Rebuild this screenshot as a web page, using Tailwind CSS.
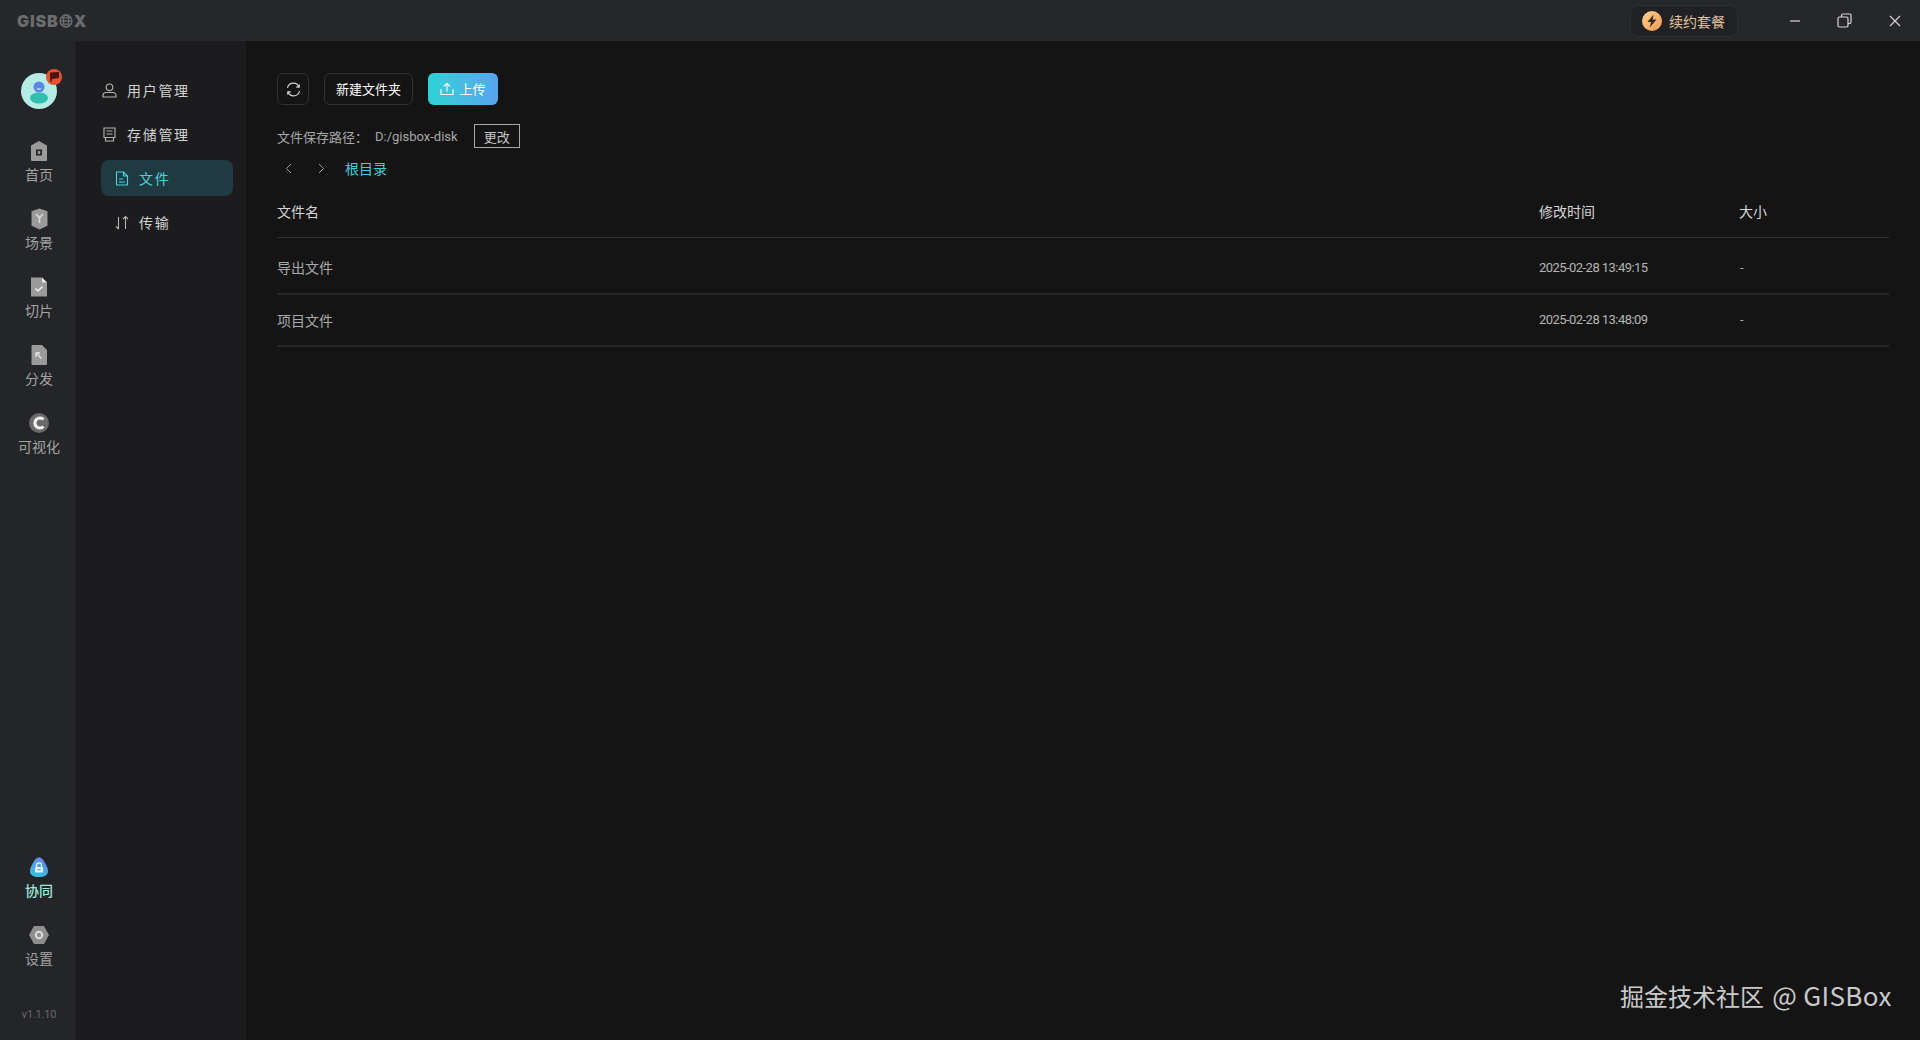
<!DOCTYPE html>
<html lang="zh-CN">
<head>
  <meta charset="UTF-8" />
  <title>GISBox</title>
  <script src="https://cdn.jsdelivr.net/npm/@tailwindcss/browser@4"></script>
</head>
<body class="bg-[#141414] text-[#aaaaaa] font-['Noto_Sans_CJK_SC','Noto_Sans',sans-serif] overflow-hidden">
<div class="relative w-[1920px] h-[1040px] flex flex-col">

  <!-- title bar -->
  <header class="h-[41px] shrink-0 bg-[#26272a] flex items-center pl-[17px]">
    <div class="flex items-center font-['Inter',sans-serif] font-black text-[16px] leading-none text-[#6b6c6e] tracking-[0.9px] w-[74px]">
      <span>GISB</span>
      <svg class="w-[14px] h-[14px] mx-[0.5px] shrink-0" viewBox="0 0 14 14" fill="none" stroke="#6b6c6e" stroke-width="1.3"><circle cx="7" cy="7" r="6"/><ellipse cx="7" cy="7" rx="2.6" ry="6"/><path d="M1 7h12M2 3.8h10M2 10.2h10"/></svg>
      <span>X</span>
    </div>
    <div class="ml-auto flex items-center">
      <div class="w-[108px] h-[32px] rounded-[8px] bg-[#202124] border border-[#2e2f32] flex items-center pl-[11px] gap-[7px]">
        <span class="w-[20px] h-[20px] rounded-full bg-linear-to-br from-[#fbd08f] to-[#ee9c50] flex items-center justify-center">
          <svg class="w-[12px] h-[14px]" viewBox="0 0 12 14" fill="#3a2a18"><path d="M7.5 0.5 1.5 8h3.6L3.8 13.5 10.5 5.6H6.6z"/></svg>
        </span>
        <span class="text-[14px] leading-none text-[#e0c09a]">续约套餐</span>
      </div>
      <div class="ml-[51px] flex items-center">
        <svg class="w-[12px] h-[12px]" viewBox="0 0 12 12" stroke="#d8d8d8" stroke-width="1.2" fill="none"><path d="M1 6h10"/></svg>
        <svg class="ml-[36px] w-[15px] h-[15px]" viewBox="0 0 15 15" stroke="#d8d8d8" stroke-width="1.2" fill="none"><rect x="1" y="4" width="10" height="10" rx="1.5"/><path d="M4.5 4V2.5A1.5 1.5 0 0 1 6 1h7a1.5 1.5 0 0 1 1 1v7a1.5 1.5 0 0 1-1.5 1.5H11"/></svg>
        <svg class="ml-[37px] mr-[19px] w-[12px] h-[12px]" viewBox="0 0 12 12" stroke="#d8d8d8" stroke-width="1.1" fill="none"><path d="M1 1l10 10M11 1 1 11"/></svg>
      </div>
    </div>
  </header>

  <div class="flex-1 flex min-h-0">
    <!-- icon rail -->
    <nav class="w-[77px] shrink-0 bg-[#242528] border-r border-[#161618] flex flex-col items-center pt-[32px] pl-[2px] text-[14px] leading-[20px] text-[#a3a3a3]">
      <div class="relative w-[36px] h-[36px] rounded-full bg-[#b5ece6]">
        <svg class="w-[36px] h-[36px]" viewBox="0 0 36 36"><circle cx="18" cy="14" r="5.5" fill="#5a86e8"/><path d="M15.5 15.5a3 3 0 0 0 5 0z" fill="#e8f4f4"/><ellipse cx="18" cy="25" rx="9" ry="5.5" fill="#2fbfae"/></svg>
        <span class="absolute -top-[4px] -right-[5px] w-[16px] h-[16px] rounded-full bg-[#e8502f] flex items-center justify-center">
          <svg class="w-[11px] h-[10px]" viewBox="0 0 11 10" fill="#4a1412"><path d="M1 0.5 10 0v6L3 7l-.6 3H1.3z"/></svg>
        </span>
      </div>

      <div class="mt-[31px] flex flex-col items-center gap-[24px]">
        <a class="flex flex-col items-center gap-[2px]">
          <svg class="w-[16px] h-[22px]" viewBox="0 0 16 22"><path fill-rule="evenodd" fill="#9a9a9a" d="M8 1l8 4.5V20a1 1 0 0 1-1 1H1a1 1 0 0 1-1-1V5.500zM5 9.500v6h6v-6zM6.800 11h2.400v3H6.800z"/></svg>
          <span>首页</span>
        </a>
        <a class="flex flex-col items-center gap-[2px]">
          <svg class="w-[17px] h-[22px]" viewBox="0 0 17 22"><path fill="#9a9a9a" d="M8.500 0.500l8 2.800v14.500l-8 3.700-8-3.700V3.300z"/><path d="M5 6l3.500 3.800L12 6M8.500 9.800V15" stroke="#d9d9d9" stroke-width="1.600" fill="none"/></svg>
          <span>场景</span>
        </a>
        <a class="flex flex-col items-center gap-[2px]">
          <svg class="w-[16px] h-[22px]" viewBox="0 0 16 22"><path fill="#9a9a9a" d="M0 1.500h11l5 5V20.500H0z"/><path fill="#e8e8e8" d="M11 1.500l5 5h-5z"/><path d="M4.500 12.500l2.500 2.500 4.500-4.500" stroke="#f0f0f0" stroke-width="1.500" fill="none"/></svg>
          <span>切片</span>
        </a>
        <a class="flex flex-col items-center gap-[2px]">
          <svg class="w-[16px] h-[22px]" viewBox="0 0 16 22"><path fill="#9a9a9a" d="M1.500 1h9.500l5 5v14a1 1 0 0 1-1 1H1.500a1 1 0 0 1-1-1V2a1 1 0 0 1 1-1z"/><path d="M10.500 14.500 5 9M5 13V9h4" stroke="#e4e4e4" stroke-width="1.300" fill="none"/></svg>
          <span>分发</span>
        </a>
        <a class="flex flex-col items-center gap-[2px]">
          <svg class="w-[20px] h-[22px]" viewBox="0 0 20 22"><circle cx="10" cy="11" r="10" fill="#6a6a6a"/><path d="M14.500 7.500a5 5 0 1 0 0 7" stroke="#f2f2f2" stroke-width="3.200" fill="none"/></svg>
          <span>可视化</span>
        </a>
      </div>

      <div class="mt-auto flex flex-col items-center gap-[24px]">
        <a class="flex flex-col items-center gap-[2px] text-[#9fe8dc] font-medium">
          <svg class="w-[18px] h-[22px]" viewBox="0 0 18 22"><defs><linearGradient id="lk" x1="0.700" y1="0" x2="0.300" y2="1"><stop offset="0" stop-color="#6c84ee"/><stop offset="1" stop-color="#2cc6e0"/></linearGradient></defs><path fill="url(#lk)" d="M9 1.500c3 0 4.500 2.500 6 5.500 1.500 2.800 3 5 3 8 0 4-3.500 6-9 6s-9-2-9-6c0-3 1.500-5.200 3-8 1.500-3 3-5.500 6-5.500z"/><path d="M6.500 11V9.300a2.500 2.500 0 0 1 5 0V11" stroke="#e8f6ff" stroke-width="1.300" fill="none"/><rect x="5" y="11" width="8" height="5.500" rx="1" fill="#e8f6ff"/><path d="M7 13.700h4" stroke="#4aa6e6" stroke-width="1"/></svg>
          <span>协同</span>
        </a>
        <a class="flex flex-col items-center gap-[2px]">
          <svg class="w-[20px] h-[22px]" viewBox="0 0 20 22"><path fill="#8e8e8e" d="M5 2h10l5 9-5 9H5l-5-9z"/><circle cx="10" cy="11" r="3.200" fill="none" stroke="#dcdcdc" stroke-width="2"/></svg>
          <span>设置</span>
        </a>
      </div>
      <div class="mt-[38px] mb-[16px] font-['Roboto',sans-serif] text-[11px] leading-[18px] text-[#66676a] tracking-[-0.2px]">v1.1.10</div>
    </nav>

    <!-- second sidebar -->
    <aside class="w-[169px] shrink-0 bg-[#1c1c1e] pt-[31px] pl-[24px] pr-[13px] flex flex-col gap-[8px] text-[14px] tracking-[1.700px]">
      <a class="h-[36px] flex items-center gap-[10px] pl-[1px] text-[#d2d2d2]">
        <svg class="w-[15px] h-[15px]" viewBox="0 0 15 15" fill="none" stroke="#b4b4b4" stroke-width="1.100"><circle cx="7.500" cy="4.300" r="3.300"/><path d="M1 14v-1.500a3 3 0 0 1 3-3h7a3 3 0 0 1 3 3V14z"/></svg>
        <span>用户管理</span>
      </a>
      <a class="h-[36px] flex items-center gap-[10px] pl-[1px] text-[#d2d2d2]">
        <svg class="w-[15px] h-[15px]" viewBox="0 0 15 15" fill="none" stroke="#b4b4b4" stroke-width="1.100"><path d="M2 1h11v9.500H2zM3.500 10.500V14h8v-3.500M4.500 4h6M4.500 7h6"/></svg>
        <span>存储管理</span>
      </a>
      <a class="h-[36px] flex items-center gap-[10px] pl-[14px] rounded-[8px] bg-[#1f3a40] text-[#4fd2de]">
        <svg class="w-[14px] h-[15px]" viewBox="0 0 14 15" fill="none" stroke="#4fd2de" stroke-width="1.100"><path d="M1.500 1h7l4 4v9h-11zM8.500 1v4h4M4 8h4M4 11h6"/></svg>
        <span>文件</span>
      </a>
      <a class="h-[36px] flex items-center gap-[10px] pl-[14px] text-[#d2d2d2]">
        <svg class="w-[14px] h-[15px]" viewBox="0 0 14 15" fill="none" stroke="#b4b4b4" stroke-width="1.100"><path d="M3.500 2v12M1 11.500 3.500 14M10.500 14V1.500M8 4l2.500-2.500L13 4"/></svg>
        <span>传输</span>
      </a>
    </aside>

    <!-- main -->
    <main class="flex-1 min-w-0 pt-[32px] pl-[31px] pr-[31px] flex flex-col">
      <div class="flex items-center h-[32px]">
        <button class="w-[32px] h-[32px] rounded-[6px] border border-[#303030] flex items-center justify-center">
          <svg class="w-[15px] h-[15px]" viewBox="0 0 15 15" fill="none" stroke="#cfcfcf" stroke-width="1.200"><path d="M1.500 6A6 6 0 0 1 13 5M13.500 9A6 6 0 0 1 2 10M13.500 2.500 13 5.300l-2.800-.4M1.500 12.500 2 9.700l2.800.4"/></svg>
        </button>
        <button class="ml-[15px] w-[89px] h-[32px] rounded-[6px] border border-[#303030] text-[13px] text-white">新建文件夹</button>
        <button class="ml-[15px] w-[70px] h-[32px] rounded-[6px] bg-linear-to-r from-[#2bd2d5] to-[#56a4ee] text-[13px] text-white flex items-center justify-center gap-[5px]">
          <svg class="w-[14px] h-[14px]" viewBox="0 0 14 14" fill="none" stroke="#fff" stroke-width="1.100"><path d="M1 7v5.500h12V7M7 9.500V1.500M4 4.300 7 1.300l3 3"/></svg>
          <span>上传</span>
        </button>
      </div>

      <div class="mt-[19px] h-[24px] flex items-center text-[13px] leading-none">
        <span class="text-[#a8a8a8]">文件保存路径：</span>
        <span class="font-['Roboto',sans-serif] text-[#a8a8a8] ml-[7px]">D:/gisbox-disk</span>
        <button class="ml-[16px] w-[46px] h-[24px] border border-[#a8a8a8] text-[13px] text-[#c4c4c4]">更改</button>
      </div>

      <div class="mt-[9px] h-[22px] flex items-center">
        <svg class="ml-[8px] w-[7px] h-[11px]" viewBox="0 0 7 11" fill="none" stroke="#9a9a9a" stroke-width="1"><path d="M6 1 1.500 5.500 6 10"/></svg>
        <svg class="ml-[26px] w-[7px] h-[11px]" viewBox="0 0 7 11" fill="none" stroke="#9a9a9a" stroke-width="1"><path d="M1 1l4.500 4.500L1 10"/></svg>
        <span class="ml-[20px] text-[14px] text-[#3fced9]">根目录</span>
      </div>

      <div class="mt-[9px] text-[14px]">
        <div class="h-[50px] flex items-center border-b border-[#333333] text-[#d4d4d4] pb-[3px]">
          <span class="flex-1">文件名</span>
          <span class="w-[200px]">修改时间</span>
          <span class="w-[150px]">大小</span>
        </div>
        <div class="h-[57px] flex items-center border-b-2 border-[#262626] pt-[4px]">
          <span class="flex-1">导出文件</span>
          <span class="w-[200px] font-['Roboto',sans-serif] text-[13px] tracking-[-0.55px] text-[#b4b4b4]">2025-02-28 13:49:15</span>
          <span class="w-[150px] font-['Roboto',sans-serif] text-[13px] pl-[1px]">-</span>
        </div>
        <div class="h-[52px] flex items-center border-b-2 border-[#262626]">
          <span class="flex-1">项目文件</span>
          <span class="w-[200px] font-['Roboto',sans-serif] text-[13px] tracking-[-0.55px] text-[#b4b4b4]">2025-02-28 13:48:09</span>
          <span class="w-[150px] font-['Roboto',sans-serif] text-[13px] pl-[1px]">-</span>
        </div>
      </div>
    </main>
  </div>

  <!-- watermark -->
  <div class="absolute left-[1620px] top-[977px] text-[24px] leading-[36px] text-[#c9c9c9] whitespace-nowrap">掘金技术社区<span class="text-[26px] ml-[2px] tracking-[0.35px]"> @ GISBox</span></div>
</div>
</body>
</html>
